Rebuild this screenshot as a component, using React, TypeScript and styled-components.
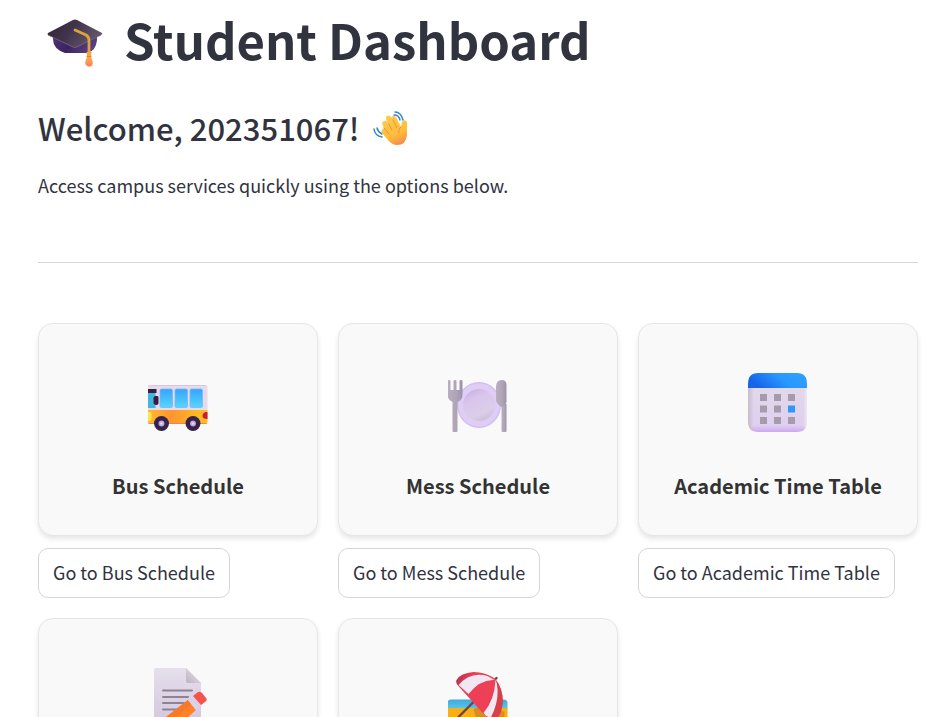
import React from "react";
import styled, { createGlobalStyle } from "styled-components";

const GlobalStyle = createGlobalStyle`
  *, *::before, *::after { box-sizing: border-box; }
  body {
    margin: 0;
    background: #ffffff;
    color: #31333f;
    font-family: "Noto Sans CJK SC", "Open Sans", sans-serif;
    font-size: 18px;
  }
`;

const Screen = styled.div`
  height: 100vh;
  overflow: hidden;
`;

const Main = styled.main`
  padding: 6px 21px 0 38px;
`;

const Title = styled.h1`
  display: flex;
  align-items: flex-end;
  gap: 20px;
  margin: 0;
  padding-left: 8px;
  font-size: 49px;
  font-weight: 700;
  line-height: 65px;
`;

const Welcome = styled.h3`
  display: flex;
  align-items: center;
  gap: 14px;
  margin: 36px 0 0;
  font-size: 31px;
  font-weight: 500;
  line-height: 42px;
`;

const Intro = styled.p`
  margin: 20px 0 0;
  line-height: 32px;
`;

const Divider = styled.hr`
  height: 1px;
  margin: 61px 0 60px;
  border: 0;
  background: #d6d6d9;
`;

const Grid = styled.div`
  display: grid;
  grid-template-columns: repeat(3, minmax(0, 1fr));
  gap: 20px;
`;

const Service = styled.section`
  display: flex;
  flex-direction: column;
  align-items: flex-start;
  gap: 12px;
`;

const Card = styled.div`
  display: flex;
  flex-direction: column;
  align-items: center;
  gap: 38px;
  width: 100%;
  min-height: 213px;
  padding: 48px 24px 32px;
  border: 1px solid #e6e6e6;
  border-radius: 15px;
  background: #f9f9f9;
  box-shadow: 0 3px 5px rgba(0, 0, 0, 0.1);
`;

const CardTitle = styled.h4`
  margin: 0;
  color: #333333;
  font-size: 20px;
  font-weight: 700;
  line-height: 32px;
  white-space: nowrap;
`;

const GoButton = styled.button`
  min-height: 50px;
  padding: 7px 14px 9px;
  border: 1px solid #d6d6d8;
  border-radius: 10px;
  background: #ffffff;
  color: inherit;
  font: inherit;
  line-height: 32px;
  white-space: nowrap;
  cursor: pointer;
`;

const Icon = styled.svg<{ $size: number }>`
  display: block;
  flex: none;
  width: ${(p) => p.$size}px;
  height: ${(p) => p.$size}px;
`;

const CapIcon = () => (
  <Icon $size={58} viewBox="0 0 58 58" aria-hidden="true">
    <defs>
      <linearGradient id="capBase" x1="0" y1="0" x2="1" y2="0.3">
        <stop offset="0" stopColor="#51327d" />
        <stop offset="0.5" stopColor="#3c2460" />
        <stop offset="1" stopColor="#593e80" />
      </linearGradient>
      <linearGradient id="capTop" x1="0" y1="0" x2="1" y2="0.4">
        <stop offset="0" stopColor="#302638" />
        <stop offset="0.5" stopColor="#41334b" />
        <stop offset="1" stopColor="#62566c" />
      </linearGradient>
      <linearGradient id="capTassel" x1="0" y1="0" x2="0" y2="1">
        <stop offset="0" stopColor="#efaa3c" />
        <stop offset="0.6" stopColor="#ffa050" />
        <stop offset="1" stopColor="#ff7467" />
      </linearGradient>
    </defs>
    <path d="M7 20H51V27Q50 38 41 40H19Q7 36 7 26Z" fill="url(#capBase)" />
    <path d="M2 20 27 7Q29 6 31 7L56 20Q57 21 55 22L31 34Q29 35 27 34L2 22Q1 21 2 20Z" fill="url(#capTop)" />
    <path d="M2 22 27 34Q29 35 31 34L55 22" fill="none" stroke="#75677c" strokeWidth=".8" />
    <path d="M29 17 40 22Q43 24 43 27V41" fill="none" stroke="#dfa23a" strokeWidth="2.8" strokeLinecap="round" />
    <path d="M40.500 39H45.500L45 44Q48 50 46 52.500Q43 55 40 52Q38 50 41 44Z" fill="url(#capTassel)" />
    <path d="M40.500 43.500H45.500" stroke="#d98a37" />
  </Icon>
);

const WaveIcon = () => (
  <Icon $size={36} viewBox="0 0 36 36" aria-hidden="true">
    <defs>
      <linearGradient id="waveHand" x1="0.3" y1="0" x2="0.7" y2="1">
        <stop offset="0" stopColor="#ffca4c" />
        <stop offset="0.65" stopColor="#ffbc3c" />
        <stop offset="1" stopColor="#f48b4e" />
      </linearGradient>
    </defs>
    <g fill="none" stroke="#3287c8" strokeWidth="1.5" strokeLinecap="round">
      <path d="M22 2Q28 2 30 10M21 5Q26 5 27 10M1 19Q2 26 9 27M4 18Q5 22 9 24" />
    </g>
    <path d="M11 18 9.500 15Q8.500 12 11 11Q13 10 14 12L15.500 15 13 9Q12.500 6 15 5.500Q17 5 18 7L20 10 18.500 8Q18.500 5.500 21 6Q23 6.500 24 9L28 17 29 12Q30 9.500 32.500 10.500Q34.500 11.500 34 15L34 25Q33 35 24 35Q19 35 15 30L9 23Q7.500 20 10 19Z" fill="url(#waveHand)" />
    <path d="M15.500 14 19 20M20 10 24 18M11 18 16 24M28 17Q25 19 26 23" fill="none" stroke="#e7943a" strokeWidth="1" strokeLinecap="round" />
  </Icon>
);

const BusIcon = () => (
  <Icon $size={60} viewBox="0.5 -1 60 60" aria-hidden="true">
    <defs>
      <linearGradient id="busBody" x1="0" y1="0" x2="1" y2="0">
        <stop offset="0" stopColor="#ffba32" />
        <stop offset="0.4" stopColor="#ff952f" />
        <stop offset="1" stopColor="#ffc51f" />
      </linearGradient>
      <linearGradient id="busGlass" x1="0" y1="0" x2="0" y2="1">
        <stop offset="0" stopColor="#36a4ff" />
        <stop offset="1" stopColor="#57d5ff" />
      </linearGradient>
      <radialGradient id="busHub">
        <stop offset="0" stopColor="#f0e2ff" />
        <stop offset="1" stopColor="#a893bb" />
      </radialGradient>
    </defs>
    <path d="M2 12H58Q60 12 60 15V38H0V15Q0 12 2 12Z" fill="#e6daec" />
    <path d="M2 12.500H58" stroke="#d5c8dc" />
    <path d="M0 37H60V49Q60 51 58 51H3Q0 51 0 48Z" fill="url(#busBody)" />
    <path d="M1 50.500H59" stroke="#ed8554" />
    <path d="M0 19H8V35H0Z" fill="#42b6df" />
    <path d="M0 16H9V20H0ZM6 25Q6 23 8 23H10Q11 23 11 25V30Q11 32 9 32Q6 32 6 29Z" fill="#351f45" />
    <g fill="url(#busGlass)" stroke="#79b9ef" strokeWidth=".8">
      <rect x="12.500" y="16" width="12.500" height="18.500" rx="1.500" />
      <rect x="27.500" y="16" width="12.500" height="18.500" rx="1.500" />
      <rect x="42.500" y="16" width="12.500" height="18.500" rx="1.500" />
    </g>
    <path d="M0 39H2Q4 39 4 41V46Q4 48 2 48H0Z" fill="#ffe343" />
    <path d="M60 39H58Q55 40 55 43Q55 46 60 46Z" fill="#cf1646" />
    <circle cx="14" cy="50.500" r="7.500" fill="#36224c" />
    <circle cx="45.500" cy="50.500" r="7.500" fill="#36224c" />
    <circle cx="14" cy="50.500" r="3" fill="url(#busHub)" />
    <circle cx="45.500" cy="50.500" r="3" fill="url(#busHub)" />
  </Icon>
);

const PlateIcon = () => (
  <Icon $size={60} viewBox="0.5 -1 60 60" aria-hidden="true">
    <defs>
      <radialGradient id="plateOuter">
        <stop offset="0.6" stopColor="#ddcdf0" />
        <stop offset="0.9" stopColor="#e0cdf8" />
        <stop offset="1" stopColor="#cdb7e9" />
      </radialGradient>
      <linearGradient id="plateInner" x1="0.2" y1="0" x2="0.7" y2="1">
        <stop offset="0" stopColor="#c7b1df" />
        <stop offset="0.3" stopColor="#d8c5ed" />
        <stop offset="0.75" stopColor="#dccdea" />
        <stop offset="1" stopColor="#cbbcd8" />
      </linearGradient>
      <linearGradient id="plateSteel" x1="0" y1="0" x2="1" y2="0">
        <stop offset="0" stopColor="#b9aec2" />
        <stop offset="0.6" stopColor="#aea4b5" />
        <stop offset="1" stopColor="#9c91a7" />
      </linearGradient>
    </defs>
    <ellipse cx="31.500" cy="32" rx="22" ry="23" fill="url(#plateOuter)" />
    <circle cx="31.500" cy="32" r="16" fill="url(#plateInner)" />
    <path d="M0 8Q0 7 1.500 7Q3 7 3 8V17H6V8Q6 7 7.500 7Q9 7 9 8V17H12V8Q12 7 13.500 7Q15 7 15 8V22Q15 27 10 29V58Q10 59 9 59H6Q5 59 5 58V29Q0 27 0 22Z" fill="url(#plateSteel)" />
    <path d="M54 31H59V58Q59 59 58 59H55Q54 59 54 58Z" fill="url(#plateSteel)" />
    <path d="M48.500 13Q49 7 54 7Q59 7 59 12V29Q58 33 54 34Q49 31 48.500 27Z" fill="url(#plateSteel)" />
  </Icon>
);

const CalendarIcon = () => (
  <Icon $size={60} viewBox="0 0 60 60" aria-hidden="true">
    <defs>
      <linearGradient id="calHead" x1="0" y1="0.3" x2="1" y2="0">
        <stop offset="0" stopColor="#1764e9" />
        <stop offset="0.5" stopColor="#2897ff" />
        <stop offset="1" stopColor="#30a2ff" />
      </linearGradient>
      <linearGradient id="calPage" x1="0" y1="0" x2="0" y2="1">
        <stop offset="0" stopColor="#e2d8ea" />
        <stop offset="0.85" stopColor="#dfd0ee" />
        <stop offset="1" stopColor="#cda8f1" />
      </linearGradient>
      <linearGradient id="calEdge" x1="0" y1="0" x2="1" y2="0">
        <stop offset="0" stopColor="#c6bbcf" />
        <stop offset="0.1" stopColor="#c6bbcf" stopOpacity="0" />
        <stop offset="0.94" stopColor="#f0e7f5" stopOpacity="0" />
        <stop offset="1" stopColor="#f0e7f5" />
      </linearGradient>
    </defs>
    <path d="M0 15H59V49Q59 60 49 60H10Q0 60 0 49Z" fill="url(#calPage)" />
    <path d="M0 15H59V49Q59 60 49 60H10Q0 60 0 49Z" fill="url(#calEdge)" />
    <path d="M10 1H49Q59 1 59 12V16H0V12Q0 1 10 1Z" fill="url(#calHead)" />
    <g fill="#a69bad">
      {[22, 33.5, 45].map((y) =>
        [12, 26, 40].map((x) => (
          <rect key={`${x}-${y}`} x={x} y={y} width="7" height="7" fill={x === 40 && y === 33.5 ? "#3197f6" : undefined} />
        ))
      )}
    </g>
  </Icon>
);

const MemoIcon = () => (
  <Icon $size={60} viewBox="0 0 60 60" aria-hidden="true">
    <defs>
      <linearGradient id="memoPage" x1="0" y1="0" x2="0" y2="1">
        <stop offset="0" stopColor="#e5dfeb" />
        <stop offset="1" stopColor="#d3c5dd" />
      </linearGradient>
      <linearGradient id="memoFold" x1="0" y1="1" x2="1" y2="0">
        <stop offset="0" stopColor="#bcb2c0" />
        <stop offset="1" stopColor="#eee8f0" />
      </linearGradient>
    </defs>
    <path d="M8 1H38L53 16V58Q53 60 51 60H8Q6 60 6 58V3Q6 1 8 1Z" fill="url(#memoPage)" />
    <path d="M38 1 53 16H40Q38 16 38 14Z" fill="url(#memoFold)" />
    <path d="M15 23.500H44M15 30H40M15 36H36M15 42.500H30" stroke="#8e8295" strokeWidth="2" strokeLinecap="round" />
    <path d="M40 33 48 43 29 60H6L18 50Z" fill="#ff8128" />
    <path d="M40 33 43 37 17 60H6L18 50Z" fill="#f6792b" />
    <path d="M40 33 45 29 53 38 48 43Z" fill="#dcd2e8" />
    <path d="M45 29 50 25Q52 24 54 26L58 31Q60 33 57 35L53 38Z" fill="#f6534c" />
  </Icon>
);

const BeachIcon = () => (
  <Icon $size={60} viewBox="0.5 0 60 60" aria-hidden="true">
    <defs>
      <linearGradient id="beachSea" x1="0" y1="0" x2="0" y2="1">
        <stop offset="0" stopColor="#43a8dc" />
        <stop offset="1" stopColor="#56c8e8" />
      </linearGradient>
      <linearGradient id="beachRed" x1="0" y1="0" x2="1" y2="0.4">
        <stop offset="0" stopColor="#b82e42" />
        <stop offset="0.35" stopColor="#ec4058" />
        <stop offset="0.8" stopColor="#ee4056" />
        <stop offset="1" stopColor="#cc3a42" />
      </linearGradient>
    </defs>
    <path d="M4 32.500H56Q60 32.500 60 36V42H0V36Q0 32.500 4 32.500Z" fill="url(#beachSea)" />
    <path d="M0 41H60V56Q60 60 56 60H4Q0 60 0 56Z" fill="#f9ae17" />
    <path d="M26 42Q42 36 57 45L56 60H31Z" fill="#d98d21" />
    <path d="M11 50 27 34M47 13 49 11" stroke="#6c4643" strokeWidth="2.400" strokeLinecap="round" />
    <path d="M9 13Q13 6 26 5Q38 5 48 12Q56 22 55 38Q54 46 50 51Q42 54 37 48L10 18Q8 15 9 13Z" fill="url(#beachRed)" />
    <path d="M11 18Q23 4 40 9L47 13Q33 12 21 27Z" fill="#f1e7f2" />
    <path d="M48 13Q54 24 47 50Q40 52 36 46Q47 33 48 13Z" fill="#f1e7f2" />
    <path d="M49 14Q59 29 53 44Q52 49 48 52Q45 53 43 51Q53 33 49 14Z" fill="#d83f4b" />
  </Icon>
);

interface ServiceItem {
  icon: React.ReactNode;
  name?: string;
}

const services: ServiceItem[] = [
  { icon: <BusIcon />, name: "Bus Schedule" },
  { icon: <PlateIcon />, name: "Mess Schedule" },
  { icon: <CalendarIcon />, name: "Academic Time Table" },
  { icon: <MemoIcon /> },
  { icon: <BeachIcon /> },
];

export default function App() {
  return (
    <Screen>
      <GlobalStyle />
      <Main>
        <Title>
          <CapIcon />
          Student Dashboard
        </Title>
        <Welcome>
          Welcome, 202351067!
          <WaveIcon />
        </Welcome>
        <Intro>Access campus services quickly using the options below.</Intro>
        <Divider />
        <Grid>
          {services.map((service, index) => (
            <Service key={index}>
              <Card>
                {service.icon}
                {service.name && <CardTitle>{service.name}</CardTitle>}
              </Card>
              {service.name && <GoButton type="button">Go to {service.name}</GoButton>}
            </Service>
          ))}
        </Grid>
      </Main>
    </Screen>
  );
}
